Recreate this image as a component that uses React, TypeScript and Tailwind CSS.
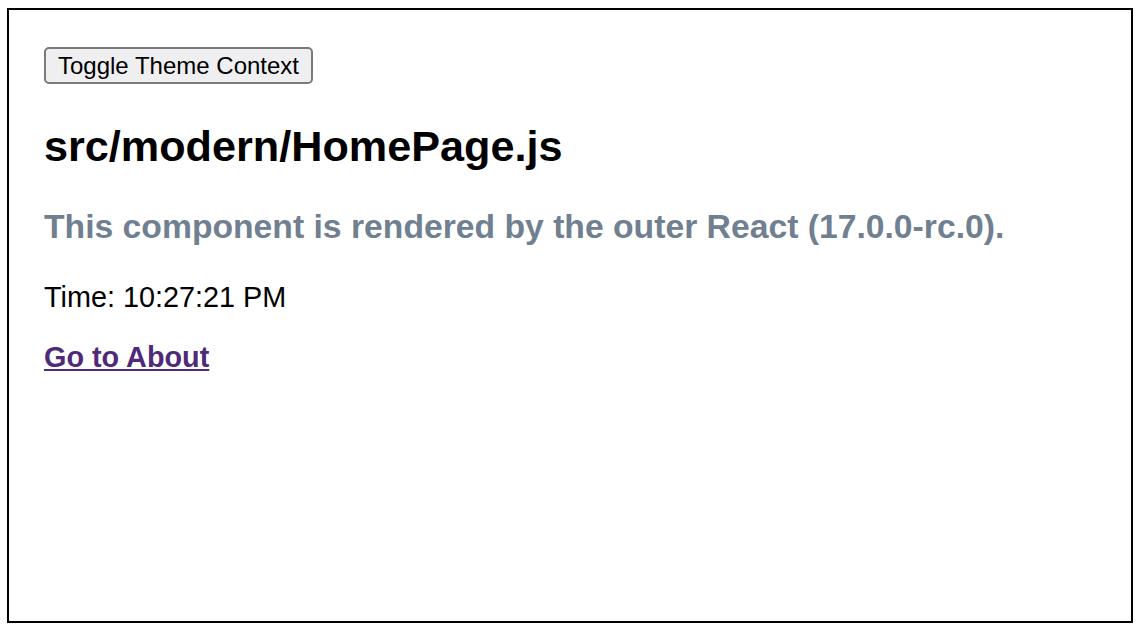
export default function App() {
  const font = { fontFamily: '"Liberation Sans", Arial, Helvetica, sans-serif' };
  return (
    <div className="w-[1142px] h-[632px] bg-white pt-[8px] pl-[7px]" style={font}>
      <div className="w-[1126px] h-[615px] border-2 border-black px-[35px] pt-[37px]">
        <button className="h-[37px] w-[269px] text-[24px] leading-none text-black bg-[#efeff1] border-2 border-[#7a7a7a] rounded-[5px]">
          Toggle Theme Context
        </button>
        <h2 className="mt-[37px] text-[43.2px] font-bold leading-[50px] text-black">src/modern/HomePage.js</h2>
        <h3 className="mt-[36px] text-[33.7px] font-bold leading-[39px] text-[#708090]">
          This component is rendered by the outer React (17.0.0-rc.0).
        </h3>
        <p className="mt-[35px] text-[28.8px] leading-[33px] text-black">Time: 10:27:21 PM</p>
        <p className="mt-[27px] text-[28.8px] leading-[33px]">
          <a href="#" className="font-bold text-[#4f2a78] underline">
            Go to About
          </a>
        </p>
      </div>
    </div>
  );
}
